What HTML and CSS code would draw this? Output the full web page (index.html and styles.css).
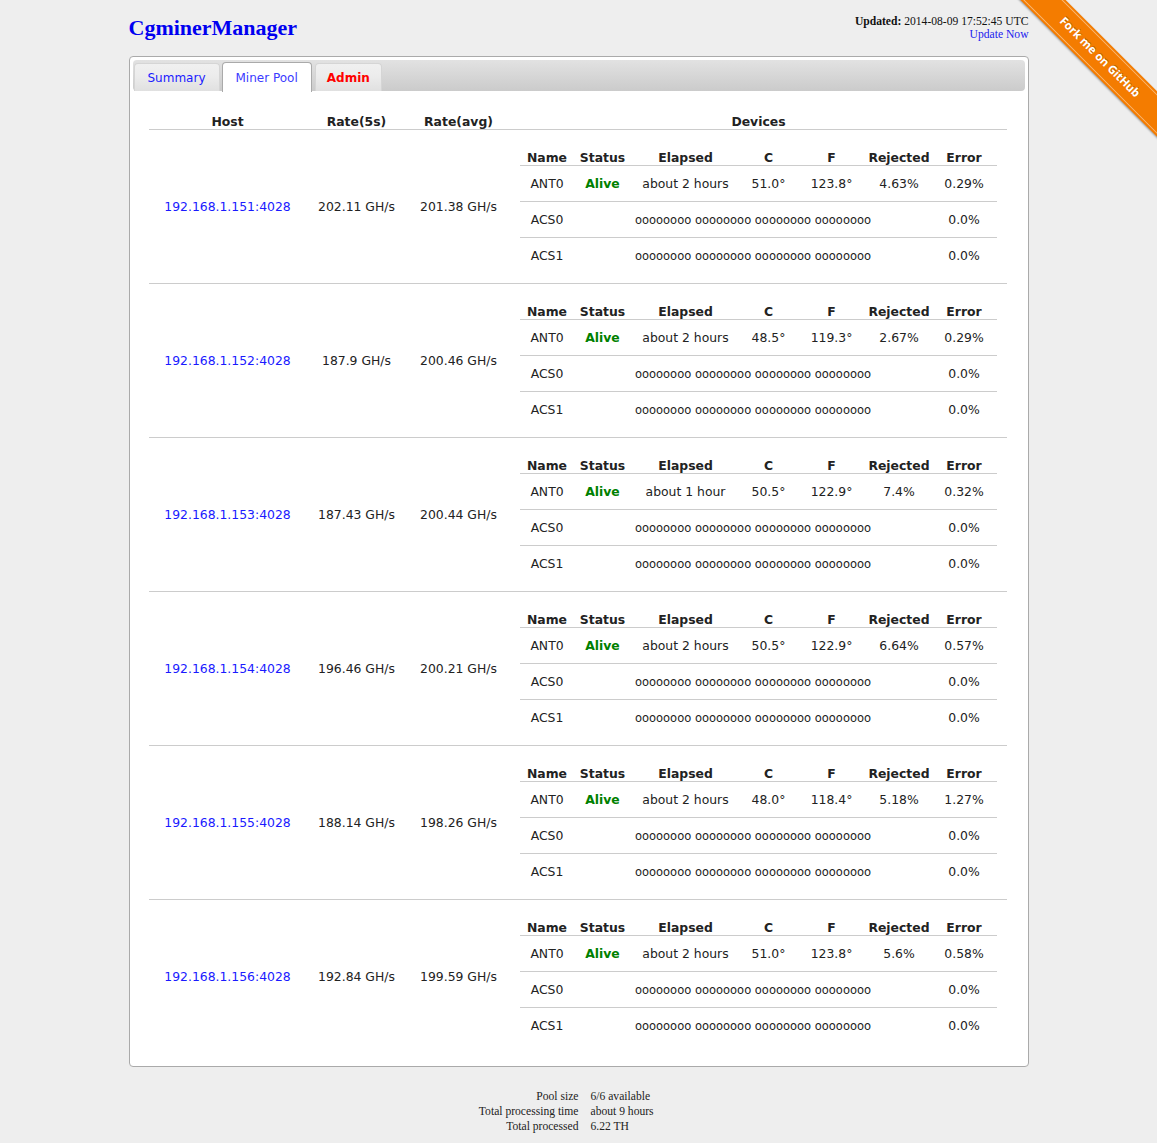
FILE: index.html
```html
<!DOCTYPE html>
<html>
<head>
<meta charset="utf-8">
<title>CgminerManager</title>
<link rel="stylesheet" href="styles.css">
</head>
<body>
<div class="ribbon-wrap"><a class="ribbon" href="#"><span>Fork me on GitHub</span></a></div>
<div class="page">
  <header class="header">
    <h1 class="logo">CgminerManager</h1>
    <div class="updated">
      <div><b>Updated:</b> 2014-08-09 17:52:45 UTC</div>
      <div><a href="#" class="update-link">Update Now</a></div>
    </div>
  </header>

  <div class="panel">
    <ul class="tabs">
      <li class="tab"><a href="#">Summary</a></li>
      <li class="tab active"><a href="#">Miner Pool</a></li>
      <li class="tab admin"><a href="#">Admin</a></li>
    </ul>
    <div class="content">
      <table class="pool">
        <colgroup><col class="c-host"><col class="c-r5"><col class="c-ravg"><col class="c-dev"></colgroup>
        <thead>
          <tr><th>Host</th><th>Rate(5s)</th><th>Rate(avg)</th><th>Devices</th></tr>
        </thead>
        <tbody>
          <tr>
            <td><a href="#" class="host">192.168.1.151:4028</a></td>
            <td>202.11 GH/s</td>
            <td>201.38 GH/s</td>
            <td class="devcell">
              <table class="dev">
                <colgroup><col class="d1"><col class="d2"><col class="d3"><col class="d4"><col class="d5"><col class="d6"><col class="d7"></colgroup>
                <tr><th>Name</th><th>Status</th><th>Elapsed</th><th>C</th><th>F</th><th>Rejected</th><th>Error</th></tr>
                <tr><td>ANT0</td><td class="alive">Alive</td><td>about 2 hours</td><td>51.0°</td><td>123.8°</td><td>4.63%</td><td>0.29%</td></tr>
                <tr><td>ACS0</td><td colspan="5" class="chips">oooooooo oooooooo oooooooo oooooooo</td><td>0.0%</td></tr>
                <tr><td>ACS1</td><td colspan="5" class="chips">oooooooo oooooooo oooooooo oooooooo</td><td>0.0%</td></tr>
              </table>
            </td>
          </tr>
          <tr>
            <td><a href="#" class="host">192.168.1.152:4028</a></td>
            <td>187.9 GH/s</td>
            <td>200.46 GH/s</td>
            <td class="devcell">
              <table class="dev">
                <colgroup><col class="d1"><col class="d2"><col class="d3"><col class="d4"><col class="d5"><col class="d6"><col class="d7"></colgroup>
                <tr><th>Name</th><th>Status</th><th>Elapsed</th><th>C</th><th>F</th><th>Rejected</th><th>Error</th></tr>
                <tr><td>ANT0</td><td class="alive">Alive</td><td>about 2 hours</td><td>48.5°</td><td>119.3°</td><td>2.67%</td><td>0.29%</td></tr>
                <tr><td>ACS0</td><td colspan="5" class="chips">oooooooo oooooooo oooooooo oooooooo</td><td>0.0%</td></tr>
                <tr><td>ACS1</td><td colspan="5" class="chips">oooooooo oooooooo oooooooo oooooooo</td><td>0.0%</td></tr>
              </table>
            </td>
          </tr>
          <tr>
            <td><a href="#" class="host">192.168.1.153:4028</a></td>
            <td>187.43 GH/s</td>
            <td>200.44 GH/s</td>
            <td class="devcell">
              <table class="dev">
                <colgroup><col class="d1"><col class="d2"><col class="d3"><col class="d4"><col class="d5"><col class="d6"><col class="d7"></colgroup>
                <tr><th>Name</th><th>Status</th><th>Elapsed</th><th>C</th><th>F</th><th>Rejected</th><th>Error</th></tr>
                <tr><td>ANT0</td><td class="alive">Alive</td><td>about 1 hour</td><td>50.5°</td><td>122.9°</td><td>7.4%</td><td>0.32%</td></tr>
                <tr><td>ACS0</td><td colspan="5" class="chips">oooooooo oooooooo oooooooo oooooooo</td><td>0.0%</td></tr>
                <tr><td>ACS1</td><td colspan="5" class="chips">oooooooo oooooooo oooooooo oooooooo</td><td>0.0%</td></tr>
              </table>
            </td>
          </tr>
          <tr>
            <td><a href="#" class="host">192.168.1.154:4028</a></td>
            <td>196.46 GH/s</td>
            <td>200.21 GH/s</td>
            <td class="devcell">
              <table class="dev">
                <colgroup><col class="d1"><col class="d2"><col class="d3"><col class="d4"><col class="d5"><col class="d6"><col class="d7"></colgroup>
                <tr><th>Name</th><th>Status</th><th>Elapsed</th><th>C</th><th>F</th><th>Rejected</th><th>Error</th></tr>
                <tr><td>ANT0</td><td class="alive">Alive</td><td>about 2 hours</td><td>50.5°</td><td>122.9°</td><td>6.64%</td><td>0.57%</td></tr>
                <tr><td>ACS0</td><td colspan="5" class="chips">oooooooo oooooooo oooooooo oooooooo</td><td>0.0%</td></tr>
                <tr><td>ACS1</td><td colspan="5" class="chips">oooooooo oooooooo oooooooo oooooooo</td><td>0.0%</td></tr>
              </table>
            </td>
          </tr>
          <tr>
            <td><a href="#" class="host">192.168.1.155:4028</a></td>
            <td>188.14 GH/s</td>
            <td>198.26 GH/s</td>
            <td class="devcell">
              <table class="dev">
                <colgroup><col class="d1"><col class="d2"><col class="d3"><col class="d4"><col class="d5"><col class="d6"><col class="d7"></colgroup>
                <tr><th>Name</th><th>Status</th><th>Elapsed</th><th>C</th><th>F</th><th>Rejected</th><th>Error</th></tr>
                <tr><td>ANT0</td><td class="alive">Alive</td><td>about 2 hours</td><td>48.0°</td><td>118.4°</td><td>5.18%</td><td>1.27%</td></tr>
                <tr><td>ACS0</td><td colspan="5" class="chips">oooooooo oooooooo oooooooo oooooooo</td><td>0.0%</td></tr>
                <tr><td>ACS1</td><td colspan="5" class="chips">oooooooo oooooooo oooooooo oooooooo</td><td>0.0%</td></tr>
              </table>
            </td>
          </tr>
          <tr>
            <td><a href="#" class="host">192.168.1.156:4028</a></td>
            <td>192.84 GH/s</td>
            <td>199.59 GH/s</td>
            <td class="devcell">
              <table class="dev">
                <colgroup><col class="d1"><col class="d2"><col class="d3"><col class="d4"><col class="d5"><col class="d6"><col class="d7"></colgroup>
                <tr><th>Name</th><th>Status</th><th>Elapsed</th><th>C</th><th>F</th><th>Rejected</th><th>Error</th></tr>
                <tr><td>ANT0</td><td class="alive">Alive</td><td>about 2 hours</td><td>51.0°</td><td>123.8°</td><td>5.6%</td><td>0.58%</td></tr>
                <tr><td>ACS0</td><td colspan="5" class="chips">oooooooo oooooooo oooooooo oooooooo</td><td>0.0%</td></tr>
                <tr><td>ACS1</td><td colspan="5" class="chips">oooooooo oooooooo oooooooo oooooooo</td><td>0.0%</td></tr>
              </table>
            </td>
          </tr>
        </tbody>
      </table>
    </div>
  </div>

  <div class="stats">
    <div class="label">Pool size</div><div class="value">6/6 available</div>
    <div class="label">Total processing time</div><div class="value">about 9 hours</div>
    <div class="label">Total processed</div><div class="value">6.22 TH</div>
  </div>
</div>
</body>
</html>
```

FILE: styles.css
```css
html, body {
  margin: 0;
  padding: 0;
  background: #eeeeee;
}
body {
  font-family: "Liberation Serif", "Times New Roman", serif;
  color: #222;
}
.page {
  width: 900px;
  margin: 0 auto;
}

/* Header */
.header {
  display: flex;
  justify-content: space-between;
  align-items: flex-start;
  height: 56px;
  box-sizing: border-box;
  padding-top: 15px;
}
.logo {
  margin: 0;
  font-size: 22px;
  line-height: 26px;
  font-weight: bold;
  color: #0000f0;
  font-family: "Liberation Serif", "Times New Roman", serif;
}
.updated {
  font-size: 11.6px;
  line-height: 13px;
  text-align: right;
  color: #111;
}
.update-link {
  color: #2020ee;
  text-decoration: none;
}

/* Panel / tabs */
.panel {
  background: #fff;
  border: 1px solid #aaaaaa;
  border-radius: 4px;
  padding: 3px;
}
.tabs {
  list-style: none;
  margin: 0;
  padding: 0 0 0 1px;
  height: 31px;
  box-sizing: border-box;
  display: flex;
  align-items: flex-end;
  gap: 2px;
  background: linear-gradient(#e2e2e2, #cbcbcb);
  border-radius: 4px;
  font-family: "DejaVu Sans", Verdana, sans-serif;
  font-size: 12px;
}
.tab {
  height: 28px;
  box-sizing: border-box;
  border: 1px solid #d5d5d5;
  border-bottom: none;
  border-radius: 4px 4px 0 0;
  background: linear-gradient(#f0f0f0 0%, #ececec 45%, #e0e0e0 100%);
  display: flex;
  align-items: center;
}
.tab a {
  display: block;
  padding: 0 13px;
  text-decoration: none;
  color: #1a1aff;
  line-height: 26px;
}
.tab.active {
  height: 30px;
  margin-bottom: -1px;
  background: #fff;
  border-color: #aaaaaa;
}
.tab.active a {
  color: #3a3aff;
}
.tab.admin {
  margin-left: 1px;
}
.tab.admin a {
  padding: 0 11px;
  color: #ff0000;
  font-weight: bold;
}

/* Content */
.content {
  padding: 20px 18px 10px 16px;
  font-family: "DejaVu Sans", Verdana, sans-serif;
  font-size: 12.4px;
  color: #222;
}
.pool {
  width: 858px;
  border-collapse: collapse;
  table-layout: fixed;
}
.c-host { width: 158px; }
.c-r5 { width: 100px; }
.c-ravg { width: 104px; }
.c-dev { width: 496px; }
.pool > thead > tr > th {
  font-weight: bold;
  padding: 3px 0 0;
  line-height: 15px;
  border-bottom: 1px solid #cccccc;
  text-align: center;
}
.pool > tbody > tr > td {
  text-align: center;
  vertical-align: middle;
  border-bottom: 1px solid #cccccc;
  padding: 0;
  line-height: 16px;
}
.pool > tbody > tr:last-child > td {
  border-bottom: none;
}
.pool > tbody > tr > td.devcell {
  padding: 17px 10px 10px 9px;
}
.host {
  color: #1a1aff;
  text-decoration: none;
}

.dev {
  width: 477px;
  border-collapse: collapse;
  table-layout: fixed;
}
.d1 { width: 55px; }
.d2 { width: 56px; }
.d3 { width: 110px; }
.d4 { width: 56px; }
.d5 { width: 70px; }
.d6 { width: 65px; }
.d7 { width: 65px; }
.dev th {
  font-weight: bold;
  padding: 3px 0 0;
  line-height: 15px;
  border-bottom: 1px solid #cccccc;
  text-align: center;
  white-space: nowrap;
}
.dev td {
  padding: 10px 0 9px;
  line-height: 16px;
  text-align: center;
  border-bottom: 1px solid #cccccc;
  white-space: nowrap;
}
.dev tr:last-child td {
  border-bottom: none;
}
.dev td.alive {
  color: #008000;
  font-weight: bold;
}
.dev td.chips {
  font-size: 11.5px;
}

/* Stats footer */
.stats {
  display: grid;
  grid-template-columns: 1fr 1fr;
  column-gap: 12px;
  margin: 22px 0 0 12px;
  font-size: 11.6px;
  line-height: 15px;
  color: #222;
}
.stats .label {
  text-align: right;
}
.stats .value {
  text-align: left;
}

/* Ribbon */
.ribbon-wrap {
  position: absolute;
  top: 0;
  right: 0;
  width: 150px;
  height: 150px;
  overflow: hidden;
}
.ribbon {
  position: absolute;
  top: 41px;
  left: -7px;
  width: 200px;
  height: 32px;
  box-sizing: border-box;
  padding: 2px 0;
  background: #f47c00;
  transform: rotate(45deg);
  box-shadow: 0 1px 2px rgba(0,0,0,0.35);
  text-decoration: none;
}
.ribbon span {
  display: block;
  height: 28px;
  box-sizing: border-box;
  border-top: 1px solid rgba(255,255,255,0.45);
  border-bottom: 1px solid rgba(255,255,255,0.45);
  color: #fff;
  font-family: "Open Sans", "DejaVu Sans", sans-serif;
  font-weight: bold;
  font-size: 11.5px;
  line-height: 26px;
  text-align: center;
  text-shadow: 0 -1px 0 rgba(0,0,0,0.25);
}
```
